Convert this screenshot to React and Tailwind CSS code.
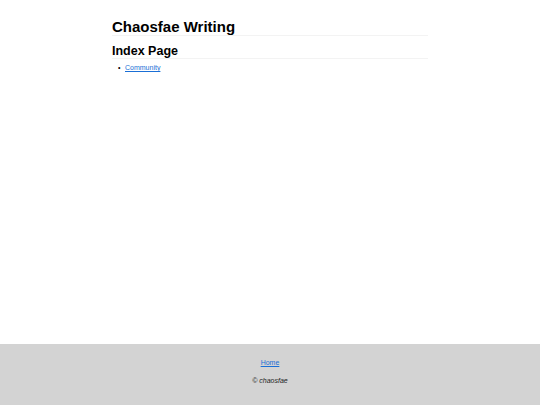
import React from 'react';

const links = [{ label: 'Community', href: '#community' }];

export default function App() {
  return (
    <div className="min-h-screen flex flex-col bg-white text-black font-['Liberation_Sans',Arial,sans-serif]">
      <main className="flex-1">
        <div className="w-[316px] mx-auto pt-[19px]">
          <h1 className="text-[15px] leading-[16px] font-bold border-b border-[#f3f3f3]">Chaosfae Writing</h1>
          <h2 className="mt-[9px] text-[12.5px] leading-[13px] font-bold border-b border-[#f3f3f3]">Index Page</h2>
          <ul className="mt-[5px] pl-[6px] text-[7px] leading-[8px]">
            {links.map((link) => (
              <li key={link.label} className="flex">
                <span className="w-[7px]">•</span>
                <a href={link.href} className="text-[#1a6fd6] underline">
                  {link.label}
                </a>
              </li>
            ))}
          </ul>
        </div>
      </main>

      {/* footer */}
      <footer className="h-[61px] bg-[#d3d3d3] flex flex-col items-center pt-[15px] gap-[10px] text-[7px] leading-[8px]">
        <a href="#home" className="text-[#1a6fd6] underline">Home</a>
        <p className="italic text-[#222]">© chaosfae</p>
      </footer>
    </div>
  );
}
